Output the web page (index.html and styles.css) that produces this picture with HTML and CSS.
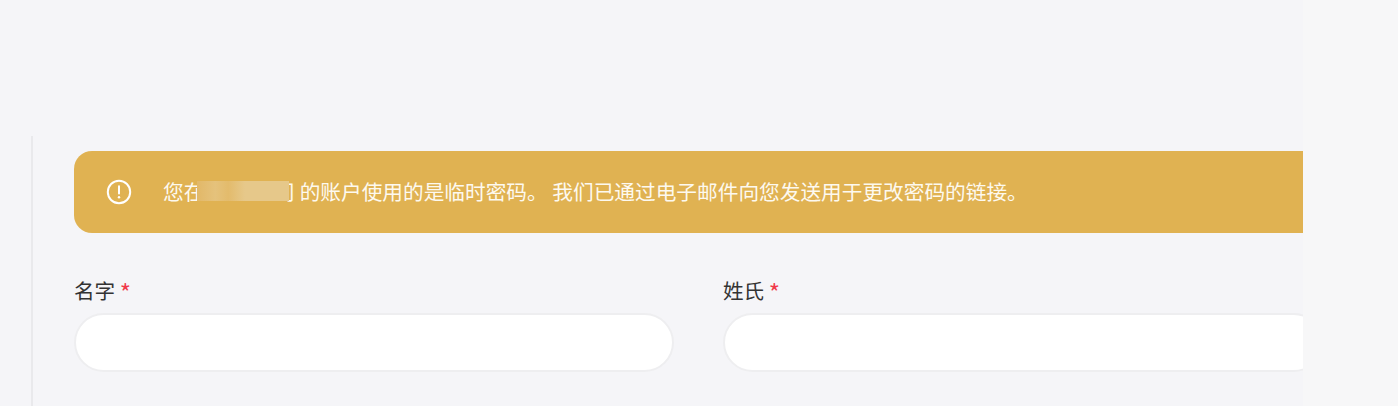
FILE: index.html
```html
<!DOCTYPE html>
<html lang="zh-CN">
<head>
<meta charset="utf-8">
<title>账户</title>
<link rel="stylesheet" href="styles.css">
</head>
<body>
<div class="viewport">
  <main class="panel">
    <div class="content">
      <div class="alert">
        <svg class="alert-icon" viewBox="0 0 26 26" width="26" height="26" aria-hidden="true">
          <circle cx="13" cy="13" r="11.2" fill="none" stroke="#fff" stroke-width="2"/>
          <path d="M13 7.2v7.4" fill="none" stroke="#fff" stroke-width="2" stroke-linecap="round"/>
          <circle cx="13" cy="18.2" r="1.2" fill="#fff"/>
        </svg>
        <p class="alert-text">您在<span class="gap"></span>司 的账户使用的是临时密码。 我们已通过电子邮件向您发送用于更改密码的链接。<span class="redacted"></span></p>
      </div>
      <div class="form-row">
        <div class="field">
          <label class="field-label">名字 <span class="req">*</span></label>
          <div class="input"></div>
        </div>
        <div class="field">
          <label class="field-label">姓氏 <span class="req">*</span></label>
          <div class="input"></div>
        </div>
      </div>
      <div class="form-row form-row-next">
        <div class="field">
          <label class="field-label">电子邮件</label>
        </div>
      </div>
    </div>
  </main>
</div>
</body>
</html>
```
FILE: styles.css
```css
* { box-sizing: border-box; }
html, body { margin: 0; height: 100%; overflow: hidden; }
body {
  background: #f7f7f8;
  font-family: "Noto Sans CJK SC", "Liberation Sans", sans-serif;
}
.viewport {
  width: 1303px;
  height: 406px;
  background: #f5f5f8;
  overflow: hidden;
  padding: 136px 0 0 31px;
}
.panel {
  width: 1400px;
  height: 270px;
  border-left: 2px solid #e9e9ec;
  padding: 15px 0 0 41px;
}
.alert {
  display: flex;
  align-items: center;
  width: 1300px;
  height: 82px;
  padding: 0 0 1px 32px;
  background: #e0b252;
  border-radius: 18px;
  color: #fff;
}
.alert-icon { flex: none; }
.alert-text {
  position: relative;
  margin: 0 0 2px 31px;
  font-size: 20.68px;
  line-height: 28px;
  color: #fdf9ef;
  white-space: nowrap;
}
.gap {
  display: inline-block;
  width: 70px;
}
.redacted {
  position: absolute;
  left: 34px;
  top: 4px;
  width: 92px;
  height: 20px;
  background: linear-gradient(90deg, #e2b868 0, #e5c27c 20%, #e3bb6c 34%, #e6c88a 52%, #e6c88a 100%);
}
.form-row {
  display: flex;
  gap: 49px;
  margin-top: 42px;
}
.form-row-next { margin-top: 28px; }
.field { flex: none; width: 600px; }
.field-label {
  display: block;
  font-size: 20.6px;
  line-height: 30px;
  color: #333;
}
.req { color: #f0394a; font-size: 24px; line-height: 1; vertical-align: -3px; }
.input {
  height: 59px;
  margin-top: 8px;
  background: #fff;
  border: 2px solid #eeeef0;
  border-radius: 29.5px;
}
```
